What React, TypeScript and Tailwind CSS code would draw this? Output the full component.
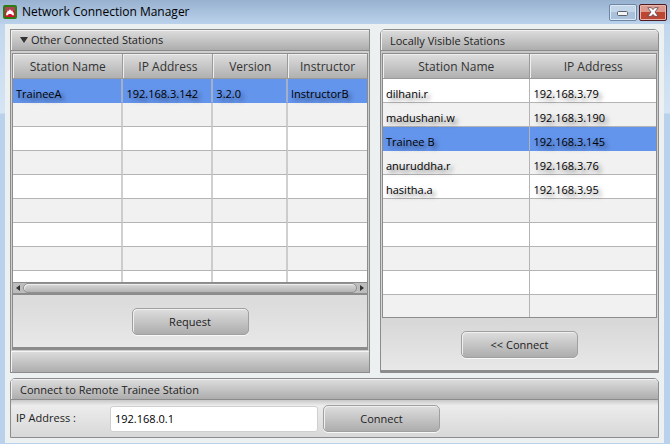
import { useState } from "react";
import type { ReactNode } from "react";
import clsx from "clsx";

type Column = { label: string; className: string };

type StationTableProps = {
  label: string;
  columns: Column[];
  rows: string[][];
  rowCount: number;
  lastRowClass: string;
  thickDividers?: boolean;
  selected: number;
  onSelect: (index: number) => void;
};

const CONNECTED_COLUMNS: Column[] = [
  { label: "Station Name", className: "w-[31.2%]" },
  { label: "IP Address", className: "w-[25.4%]" },
  { label: "Version", className: "w-[21.1%]" },
  { label: "Instructor", className: "w-auto" },
];

const CONNECTED_ROWS = [["TraineeA", "192.168.3.142", "3.2.0", "InstructorB"]];

const VISIBLE_COLUMNS: Column[] = [
  { label: "Station Name", className: "w-[54%]" },
  { label: "IP Address", className: "w-auto" },
];

const VISIBLE_ROWS = [
  ["dilhani.r", "192.168.3.79"],
  ["madushani.w", "192.168.3.190"],
  ["Trainee B", "192.168.3.145"],
  ["anuruddha.r", "192.168.3.76"],
  ["hasitha.a", "192.168.3.95"],
];

export default function App() {
  const [connectedRow, setConnectedRow] = useState(0);
  const [visibleRow, setVisibleRow] = useState(2);
  const [address, setAddress] = useState("192.168.0.1");
  const [expanded, setExpanded] = useState(true);

  return (
    <div className="min-h-screen bg-[linear-gradient(#bcd3ec,#d6e5f4_113px,#b9d1ea_114px)] font-['Open_Sans','Noto_Sans',sans-serif] text-[#222]">
      <TitleBar />
      <main className="mr-[6px] ml-[5px] bg-[#ecf0f1] p-[5px]">
        <div className="grid grid-cols-[40fr_31fr] gap-[10px]">
          <section className="flex flex-col border border-[#8c8c8c] bg-[#cfcfcf]">
            <h2 className="h-[21px] border-b border-[#8c8c8c]">
              <button
                type="button"
                aria-expanded={expanded}
                onClick={() => setExpanded(!expanded)}
                className="flex h-full w-full items-center gap-[3px] bg-linear-to-b from-[#dedede] to-[#adadad] pl-[9px] text-[11px] leading-[20px] shadow-[inset_1px_1px_0_#f0f0f0]"
              >
                <svg width="8" height="6" viewBox="0 0 8 6" aria-hidden="true">
                  <path d="M0 0h8L4 6z" fill="#333" />
                </svg>
                Other Connected Stations
              </button>
            </h2>
            {expanded ? (
              <div className="mx-px mt-[2px] flex-1 border border-b-[3px] border-[#8c8c8c] bg-linear-to-b from-[#dcdcdc] from-85% to-[#e8e8e8]">
                <StationTable
                  label="Other connected stations"
                  columns={CONNECTED_COLUMNS}
                  rows={CONNECTED_ROWS}
                  rowCount={9}
                  lastRowClass="h-[11px]"
                  thickDividers
                  selected={connectedRow}
                  onSelect={setConnectedRow}
                />
                <HorizontalScrollBar />
                <div className="flex justify-center pt-[13px]">
                  <PushButton>Request</PushButton>
                </div>
              </div>
            ) : null}
            <div className="mt-px h-[21px] bg-linear-to-b from-[#dedede] to-[#adadad] shadow-[inset_1px_1px_0_#f4f4f4]" />
          </section>

          <Panel title="Locally Visible Stations">
            <div className="border-b-2 border-[#8c8c8c] bg-linear-to-b from-[#c8c8c8] via-[#d8d8d8] via-85% to-[#e8e8e8] px-px pt-[2px] pb-[12px]">
              <div className="border border-[#8c8c8c]">
                <StationTable
                  label="Locally visible stations"
                  columns={VISIBLE_COLUMNS}
                  rows={VISIBLE_ROWS}
                  rowCount={10}
                  lastRowClass="h-[22px]"
                  selected={visibleRow}
                  onSelect={setVisibleRow}
                />
              </div>
              <div className="flex justify-center pt-[13px]">
                <PushButton>&lt;&lt; Connect</PushButton>
              </div>
            </div>
          </Panel>
        </div>

        <div className="mt-[5px]">
          <Panel title="Connect to Remote Trainee Station">
            <form
              className="flex items-center bg-linear-to-b from-[#c8c8c8] via-[#ececec] via-15% to-[#d8d8d8] px-[5px] py-[5px]"
              onSubmit={(event) => event.preventDefault()}
            >
              <label htmlFor="remote-address" className="w-[94px] text-[11px]">
                IP Address :
              </label>
              <input
                id="remote-address"
                value={address}
                onChange={(event) => setAddress(event.target.value)}
                className="mr-[5px] h-[26px] w-[208px] rounded-[3px] border border-[#cfcfcf] bg-white px-1 text-[11px] text-black outline-none"
              />
              <PushButton>Connect</PushButton>
            </form>
          </Panel>
        </div>
      </main>
    </div>
  );
}

function TitleBar() {
  return (
    <header className="flex h-6 items-center justify-between bg-linear-to-b from-[#98b1cf] to-[#bad2eb] pr-[3px] pl-[3px] text-black">
      <div className="flex items-center gap-[5px] pb-px">
        <svg width="14" height="14" viewBox="0 0 14 14" aria-hidden="true">
          <rect width="14" height="14" rx="2" fill="#2c7d12" />
          <rect x="2" y="2" width="10" height="10" fill="#d3142f" />
          <path d="M2 2h10v4l-3-1-2-1-2 1-3 2z" fill="#a94854" />
          <path
            d="M6.500 4.600h1l.6 1.200 1.500-.2.100 1.300 1.400 1-.6.900.8 1.400H9.200L8.300 9H5.700l-.9 1.200H2.700l.8-1.400-.6-.9 1.400-1 .1-1.300 1.500.2z"
            fill="#fff"
          />
        </svg>
        <h1 className="text-[12px]">Network Connection Manager</h1>
      </div>
      <div className="flex gap-[2px]">
        <button
          type="button"
          aria-label="Minimize"
          className="grid h-[17px] w-7 place-items-center rounded-[2px] border border-[#6d86a3] bg-linear-to-b from-[#c3d5e9] from-50% to-[#a9c1db] to-50% shadow-[inset_0_0_0_1px_#dce8f5]"
        >
          <svg width="12" height="8" viewBox="0 0 12 8" aria-hidden="true">
            <rect x="0.500" y="3.500" width="10" height="4" rx="1" fill="#f4f4f4" stroke="#59616d" />
          </svg>
        </button>
        <button
          type="button"
          aria-label="Close"
          className="grid h-[17px] w-7 place-items-center rounded-[2px] border border-[#4e1a22] bg-linear-to-b from-[#dc9a8f] from-50% to-[#bd4632] to-50% shadow-[inset_0_0_0_1px_#eab5ac]"
        >
          <svg width="12" height="10" viewBox="0 0 12 10" aria-hidden="true">
            <path
              d="M.8.700h3.500L6 2.600 7.700.700h3.500L8 5l3.200 4.300H7.700L6 7.400 4.300 9.300H.8L4 5z"
              fill="#fff"
              stroke="#5b4550"
              strokeWidth="0.800"
            />
          </svg>
        </button>
      </div>
    </header>
  );
}

function Panel({ title, children }: { title: string; children: ReactNode }) {
  return (
    <section className="overflow-hidden rounded-t-[5px] border border-[#8c8c8c]">
      <h2 className="h-[21px] border-b border-[#8c8c8c] bg-linear-to-b from-[#dedede] to-[#adadad] pl-[9px] text-[11px] leading-[21px] shadow-[inset_1px_1px_0_#f0f0f0]">
        {title}
      </h2>
      {children}
    </section>
  );
}

function PushButton({ children }: { children: ReactNode }) {
  return (
    <button
      type="button"
      className="h-[27px] w-[117px] rounded-[5px] border border-[#a0a0a0] bg-linear-to-b from-[#dedede] to-[#adadad] pt-px text-[11px] shadow-[0_1px_0_#f8f8f8,inset_1px_1px_0_#efefef]"
    >
      {children}
    </button>
  );
}

function HorizontalScrollBar() {
  return (
    <div className="flex h-[13px] border-t border-b-2 border-[#8c8c8c] bg-[#bdbdbd]">
      <button type="button" aria-label="Scroll left" className="grid w-[10px] place-items-center">
        <svg width="4" height="6" viewBox="0 0 4 6" aria-hidden="true">
          <path d="M4 0v6L0 3z" fill="#333" />
        </svg>
      </button>
      <div className="flex-1 rounded-full border border-[#909090] bg-linear-to-b from-[#dadada] to-[#b4b4b4] shadow-[inset_1px_1px_0_#eee]" />
      <button type="button" aria-label="Scroll right" className="grid w-[10px] place-items-center">
        <svg width="4" height="6" viewBox="0 0 4 6" aria-hidden="true">
          <path d="M0 0v6l4-3z" fill="#333" />
        </svg>
      </button>
    </div>
  );
}

function StationTable({
  label,
  columns,
  rows,
  rowCount,
  lastRowClass,
  thickDividers = false,
  selected,
  onSelect,
}: StationTableProps) {
  const indexes = Array.from({ length: rowCount }, (_, index) => index);

  return (
    <table aria-label={label} className="w-full table-fixed border-separate border-spacing-0">
      <thead>
        <tr>
          {columns.map((column) => (
            <th
              key={column.label}
              scope="col"
              className={clsx(
                "h-[25px] border-r border-b border-[#9a9a9a] bg-linear-to-b from-[#dedede] to-[#b0b0b0] p-0 pt-[2px] text-[12px] leading-[22px] font-normal text-[#333] shadow-[inset_1px_1px_0_#efefef] last:border-r-0",
                column.className,
              )}
            >
              {column.label}
            </th>
          ))}
        </tr>
      </thead>
      <tbody>
        {indexes.map((index) => {
          const active = index === selected;
          const last = index === rowCount - 1;

          return (
            <tr
              key={index}
              aria-selected={active}
              onClick={() => {
                if (rows[index]) {
                  onSelect(index);
                }
              }}
              className={active ? "bg-[#6495ed]" : index % 2 === 1 ? "bg-[#f1f1f1]" : "bg-white"}
            >
              {columns.map((column, cell) => (
                <td
                  key={column.label}
                  className={clsx(
                    "p-0 pl-[3px] text-[11px] leading-[16px] text-black [text-shadow:3px_3px_4px_rgba(0,0,0,0.5)] last:border-r-0",
                    last ? lastRowClass : "h-6 border-b",
                    rows[index] && "pt-[7px]",
                    thickDividers ? "border-r-2 border-r-[#bcbcbc]/70" : "border-r border-r-[#b4b4b4]",
                    active ? "border-b-[#6495ed]" : "border-b-[#b4b4b4]",
                  )}
                >
                  {rows[index]?.[cell]}
                </td>
              ))}
            </tr>
          );
        })}
      </tbody>
    </table>
  );
}
